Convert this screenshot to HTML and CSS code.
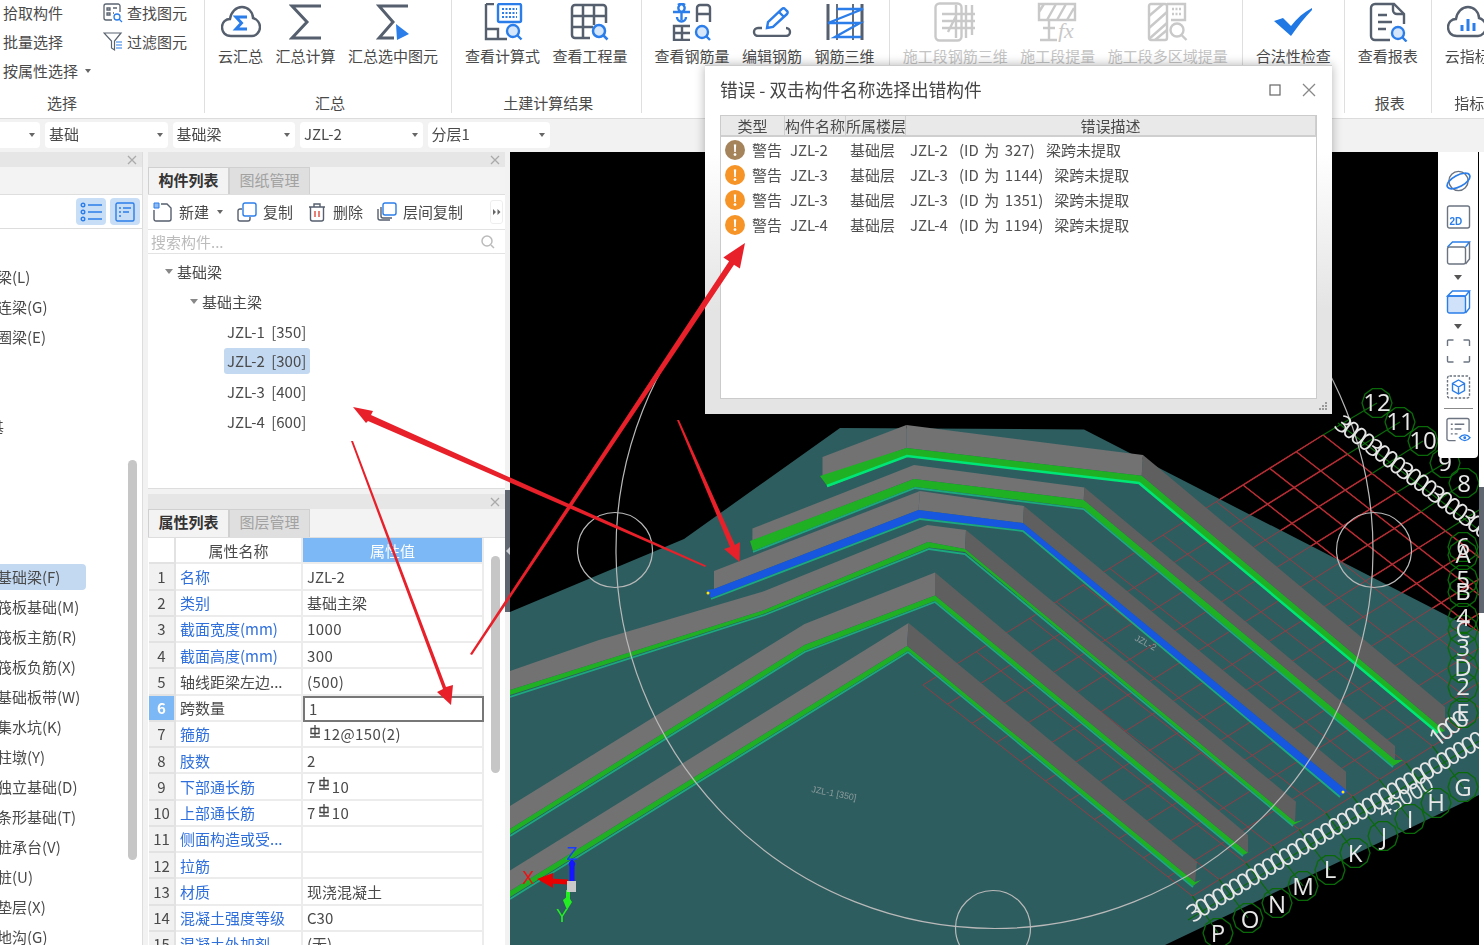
FILE: index.html
```html
<!DOCTYPE html>
<html lang="zh">
<head>
<meta charset="utf-8">
<title>错误 - 双击构件名称选择出错构件</title>
<link rel="stylesheet" href="styles.css">
</head>
<body>
<div class="app">
  <header class="ribbon">
    <section class="rgroup g-select">
      <div class="rbody select-body">
        <div class="scol">
          <div class="sitem">拾取构件</div>
          <div class="sitem">批量选择</div>
          <div class="sitem">按属性选择<span class="caret c-gap"></span></div>
        </div>
        <div class="scol scol-2">
          <div class="sitem">
            <svg class="ic20" viewBox="0 0 20 20" fill="none" stroke="#5a6370" stroke-width="1.3"><path d="M17 9V3a2 2 0 0 0-2-2H3a2 2 0 0 0-2 2v12a2 2 0 0 0 2 2h6"/><path d="M4 5h3v2H4zM10 5h4M4 10h3v2H4zM10 10h1"/><circle cx="14" cy="14" r="3" stroke="#2b7de9"/><path d="M16 16l3 3" stroke="#2b7de9"/></svg>
            <span>查找图元</span>
          </div>
          <div class="sitem">
            <svg class="ic20" viewBox="0 0 20 20" fill="none" stroke="#5a6370" stroke-width="1.2"><path d="M1 1h17l-6.500 8v9l-3-2V9z"/><path d="M13 10h6M13 13h6M13 16h6" stroke="#2b7de9"/></svg>
            <span>过滤图元</span>
          </div>
        </div>
      </div>
      <div class="rlabel rlabel-left">选择</div>
    </section>

    <section class="rgroup">
      <div class="rbody">
        <div class="rbtn"><div class="rico">
          <svg width="40" height="34" viewBox="0 0 40 34" fill="none" stroke="#555f6e" stroke-width="2.400"><path d="M10 31C4 31 1 27 1 22c0-5 4-8 8-8C10 7 15 2 21 2c6 0 11 5 11 11 4 1 7 5 7 9 0 5-4 9-8 9z"/><path d="M26 12H15l5.500 6L15 24h11" stroke="#2b7de9" stroke-width="3"/></svg>
        </div><span>云汇总</span></div>
        <div class="rbtn"><div class="rico">
          <svg width="33" height="36" viewBox="0 0 33 36" fill="none" stroke="#555f6e" stroke-width="3"><path d="M32 2H3l15 16L3 34h29"/></svg>
        </div><span>汇总计算</span></div>
        <div class="rbtn"><div class="rico">
          <svg width="34" height="36" viewBox="0 0 34 36" fill="none" stroke="#555f6e" stroke-width="3"><path d="M32 2H3l14 16L3 34h15"/><path d="M20 20l13 10-12 6z" fill="#2b7de9" stroke="none"/></svg>
        </div><span>汇总选中图元</span></div>
      </div>
      <div class="rlabel">汇总</div>
    </section>

    <section class="rgroup">
      <div class="rbody">
        <div class="rbtn"><div class="rico">
          <svg width="40" height="38" viewBox="0 0 40 38" fill="none" stroke="#555f6e" stroke-width="2.400"><path d="M3 1v35h21M3 26h12v10M3 1h8"/><rect x="15" y="1" width="23" height="18" rx="1.500" stroke="#2b7de9"/><path d="M19 6h15M19 10h15M19 14h15" stroke="#2b7de9" stroke-dasharray="2 1.500" stroke-width="2"/><circle cx="30" cy="28" r="6" fill="#d6e7fb" stroke="#2b7de9"/><path d="M34.500 32.500l4 4" stroke="#2b7de9"/></svg>
        </div><span>查看计算式</span></div>
        <div class="rbtn"><div class="rico">
          <svg width="40" height="38" viewBox="0 0 40 38" fill="none" stroke="#555f6e" stroke-width="2.500"><path d="M20 35H5a3 3 0 0 1-3-3V5a3 3 0 0 1 3-3h28a3 3 0 0 1 3 3v15"/><path d="M2 13h34M2 24h21M13 2v33M24 2v20"/><circle cx="29" cy="28" r="6" fill="#d6e7fb" stroke="#2b7de9"/><path d="M33.500 32.500l4 4" stroke="#2b7de9"/></svg>
        </div><span>查看工程量</span></div>
      </div>
      <div class="rlabel">土建计算结果</div>
    </section>

    <section class="rgroup wide">
      <div class="rbody">
        <div class="rbtn"><div class="rico">
          <svg width="40" height="38" viewBox="0 0 40 38" fill="none" stroke="#555f6e" stroke-width="2.400"><path d="M1 9h8a4 4 0 1 0-3-7M18 9h-8a4 4 0 1 1 3-7M9.500 9v8M5 14a4 4 0 0 0 9 0" stroke="#2b7de9"/><path d="M25 19V5a3 3 0 0 1 3-3h7a3 3 0 0 1 3 3v14M25 11h13"/><path d="M18 37H2V23h16M2 30h16M10 23v14"/><circle cx="30" cy="29" r="6" fill="#d6e7fb" stroke="#2b7de9"/><path d="M34.500 33.500l3.500 3.500" stroke="#2b7de9"/></svg>
        </div><span>查看钢筋量</span></div>
        <div class="rbtn"><div class="rico">
          <svg width="40" height="30" viewBox="0 0 40 30" fill="none" stroke="#555f6e" stroke-width="2.400"><path d="M10 21H6a4 4 0 0 0 0 8h28a4 4 0 0 0 0-8" /><path d="M15 21l1-6L30 2a2 2 0 0 1 3 0l2 2a2 2 0 0 1 0 3L21 20zM27 5l5 5" stroke="#2b7de9"/></svg>
        </div><span>编辑钢筋</span></div>
        <div class="rbtn"><div class="rico">
          <svg width="40" height="38" viewBox="0 0 40 38" fill="none" stroke="#555f6e" stroke-width="3"><path d="M3 1v36M37 1v36"/><path d="M12 1v36M28 1v36" stroke-width="1.800"/><path d="M12 6h26L3 20h32L10 34h26" stroke="#2b7de9" stroke-width="2.400"/></svg>
        </div><span>钢筋三维</span></div>
      </div>
      <div class="rlabel"></div>
    </section>

    <section class="rgroup off wide">
      <div class="rbody">
        <div class="rbtn"><div class="rico">
          <svg width="42" height="40" viewBox="0 0 42 40" fill="none" stroke="#c9c9c9" stroke-width="2.400"><rect x="1.500" y="1.500" width="26" height="37" rx="4"/><path d="M8 12h33M8 19h33M8 26h33M22 3v33M32 3v33M38 3v30M22 14l-8 16"/></svg>
        </div><span>施工段钢筋三维</span></div>
        <div class="rbtn"><div class="rico">
          <svg width="42" height="40" viewBox="0 0 42 40" fill="none" stroke="#c9c9c9" stroke-width="2.400"><path d="M2 2h36v16H2zM10 18l9-16M20 18l9-16M30 18l7-12M2 10l5-8"/><path d="M12 18v20M3 38h17M6 26h12"/><text class="fx" x="21" y="36">fx</text></svg>
        </div><span>施工段提量</span></div>
        <div class="rbtn"><div class="rico">
          <svg width="42" height="40" viewBox="0 0 42 40" fill="none" stroke="#c9c9c9" stroke-width="2.400"><rect x="2" y="2" width="18" height="36" rx="2"/><path d="M2 14L16 2M2 26L20 10M2 37l18-16M8 38l12-10"/><path d="M20 2h18v16H24" /><path d="M25 7h10M25 12h10" stroke-dasharray="2 1.500" stroke-width="2.500"/><circle cx="30" cy="28" r="6.500"/><path d="M34.500 33l5 5"/></svg>
        </div><span>施工段多区域提量</span></div>
      </div>
      <div class="rlabel"></div>
    </section>

    <section class="rgroup">
      <div class="rbody">
        <div class="rbtn"><div class="rico">
          <svg width="38" height="28" viewBox="0 0 38 28"><path d="M0 13l9-3 8 8C23 10 30 4 38 0l1 1C31 9 24 18 17 28z" fill="#1f78e4"/></svg>
        </div><span>合法性检查</span></div>
      </div>
      <div class="rlabel"></div>
    </section>

    <section class="rgroup">
      <div class="rbody">
        <div class="rbtn"><div class="rico">
          <svg width="40" height="40" viewBox="0 0 40 40" fill="none" stroke="#555f6e" stroke-width="2.400"><path d="M22 38H7a4 4 0 0 1-4-4V6a4 4 0 0 1 4-4h19l10 10v10"/><path d="M25 2v6a4 4 0 0 0 4 4h7"/><path d="M10 13h9M10 20h14M10 27h8"/><circle cx="30" cy="31" r="6" fill="#d6e7fb" stroke="#2b7de9"/><path d="M34.500 35.500l4 4" stroke="#2b7de9"/></svg>
        </div><span>查看报表</span></div>
      </div>
      <div class="rlabel">报表</div>
    </section>

    <section class="rgroup last">
      <div class="rbody">
        <div class="rbtn"><div class="rico">
          <svg width="40" height="34" viewBox="0 0 40 34" fill="none" stroke="#555f6e" stroke-width="2.400"><path d="M10 31C4 31 1 27 1 22c0-5 4-8 8-8C10 7 15 2 21 2c6 0 11 5 11 11 4 1 7 5 7 9 0 5-4 9-8 9z"/><path d="M15 20v6M21 14v12M27 18v8" stroke="#2b7de9" stroke-width="3"/></svg>
        </div><span>云指标</span></div>
      </div>
      <div class="rlabel">指标</div>
    </section>
  </header>

  <div class="selectors">
    <div class="combo combo-first"><span></span><i class="caret"></i></div>
    <div class="combo"><span>基础</span><i class="caret"></i></div>
    <div class="combo"><span>基础梁</span><i class="caret"></i></div>
    <div class="combo"><span>JZL-2</span><i class="caret"></i></div>
    <div class="combo"><span>分层1</span><i class="caret"></i></div>
  </div>

  <main class="workspace">
    <aside class="nav-panel">
      <div class="titlebar"><svg class="x" viewBox="0 0 10 10"><path d="M1 1l8 8M9 1l-8 8"/></svg></div>
      <div class="nav-tabs"></div>
      <div class="nav-tools">
        <button class="tool-on">
          <svg width="22" height="20" viewBox="0 0 22 20" fill="none" stroke="#2b7de9" stroke-width="1.400"><circle cx="3" cy="3" r="1.800"/><circle cx="3" cy="10" r="1.800"/><circle cx="3" cy="17" r="1.800"/><path d="M8 3h14M8 10h14M8 17h14"/></svg>
        </button>
        <button class="tool-on">
          <svg width="20" height="20" viewBox="0 0 20 20" fill="none" stroke="#2b7de9" stroke-width="1.400"><rect x="1" y="1" width="18" height="18" rx="1.500"/><path d="M4 6h2M8 6h8M4 10h2M8 10h6M4 14h2"/></svg>
        </button>
      </div>
      <div class="nav-list">
        <div class="nav-item">梁(L)</div>
        <div class="nav-item">连梁(G)</div>
        <div class="nav-item">圈梁(E)</div>
        <div class="nav-item gap-2 cut">基</div>
        <div class="nav-item gap-4 sel">基础梁(F)</div>
        <div class="nav-item">筏板基础(M)</div>
        <div class="nav-item">筏板主筋(R)</div>
        <div class="nav-item">筏板负筋(X)</div>
        <div class="nav-item">基础板带(W)</div>
        <div class="nav-item">集水坑(K)</div>
        <div class="nav-item">柱墩(Y)</div>
        <div class="nav-item">独立基础(D)</div>
        <div class="nav-item">条形基础(T)</div>
        <div class="nav-item">桩承台(V)</div>
        <div class="nav-item">桩(U)</div>
        <div class="nav-item">垫层(X)</div>
        <div class="nav-item">地沟(G)</div>
      </div>
      <div class="sb sb-nav"></div>
    </aside>

    <div class="mid">
      <section class="panel p-list">
        <div class="titlebar"><svg class="x" viewBox="0 0 10 10"><path d="M1 1l8 8M9 1l-8 8"/></svg></div>
        <div class="tabs"><div class="tab on">构件列表</div><div class="tab">图纸管理</div></div>
        <div class="tools">
          <div class="tool">
            <svg class="ic20" viewBox="0 0 20 20" fill="none" stroke="#555f6e" stroke-width="1.400"><path d="M8 2h6l4 4v11a2 2 0 0 1-2 2H3a2 2 0 0 1-2-2V8"/><path d="M1 1h5v5H1z" fill="#8fbcf2" stroke="#2b7de9" stroke-width="1"/></svg>
            <span>新建</span><i class="caret tool-caret"></i>
          </div>
          <div class="tool">
            <svg class="ic20" viewBox="0 0 20 20" fill="none" stroke="#555f6e" stroke-width="1.400"><path d="M5 7H3a2 2 0 0 0-2 2v8a2 2 0 0 0 2 2h8a2 2 0 0 0 2-2v-2"/><rect x="6" y="1" width="13" height="13" rx="2" stroke="#2b7de9"/></svg>
            <span>复制</span>
          </div>
          <div class="tool">
            <svg class="ic20" viewBox="0 0 20 20" fill="none" stroke="#555f6e" stroke-width="1.400"><path d="M2 5h16M7 5V2h6v3M3.500 5v12a2 2 0 0 0 2 2h9a2 2 0 0 0 2-2V5"/><path d="M8 9v6M12 9v6" stroke="#e04a3c"/></svg>
            <span>删除</span>
          </div>
          <div class="tool">
            <svg class="ic20" viewBox="0 0 20 20" fill="none" stroke="#555f6e" stroke-width="1.400"><path d="M1 7v9a2 2 0 0 0 2 2h10M4 5v9a2 2 0 0 0 2 2h9"/><rect x="6" y="1" width="13" height="12" rx="2" stroke="#2b7de9"/></svg>
            <span>层间复制</span>
          </div>
          <div class="more">
            <svg width="8" height="8" viewBox="0 0 8 8" fill="#666"><path d="M0 1l3 3-3 3zM4.500 1l3 3-3 3z"/></svg>
          </div>
        </div>
        <div class="search">
          <span>搜索构件...</span>
          <svg width="14" height="14" viewBox="0 0 14 14" fill="none" stroke="#bbb" stroke-width="1.500"><circle cx="6" cy="6" r="5"/><path d="M10 10l3 3"/></svg>
        </div>
        <div class="tree">
          <div class="node lv1"><i class="tri"></i>基础梁</div>
          <div class="node lv2"><i class="tri"></i>基础主梁</div>
          <div class="node lv3">JZL-1 [350]</div>
          <div class="node lv3"><span class="picked">JZL-2 [300]</span></div>
          <div class="node lv3">JZL-3 [400]</div>
          <div class="node lv3">JZL-4 [600]</div>
        </div>
      </section>

      <section class="panel p-props">
        <div class="titlebar"><svg class="x" viewBox="0 0 10 10"><path d="M1 1l8 8M9 1l-8 8"/></svg></div>
        <div class="tabs tabs-2"><div class="tab on">属性列表</div><div class="tab">图层管理</div></div>
        <div class="props">
          <div class="c num"></div><div class="c head">属性名称</div><div class="c head val-head">属性值</div>
          <div class="c num">1</div><div class="c link">名称</div><div class="c">JZL-2</div>
          <div class="c num">2</div><div class="c link">类别</div><div class="c">基础主梁</div>
          <div class="c num">3</div><div class="c link">截面宽度(mm)</div><div class="c n">1000</div>
          <div class="c num">4</div><div class="c link">截面高度(mm)</div><div class="c n">300</div>
          <div class="c num">5</div><div class="c">轴线距梁左边...</div><div class="c n">(500)</div>
          <div class="c num num-on">6</div><div class="c">跨数量</div><div class="c editing">1</div>
          <div class="c num">7</div><div class="c link">箍筋</div><div class="c n"><svg class="steel" viewBox="0 0 12 14"><path d="M2 3.500h8v5H2zM6 0v11M1 12h10"/></svg>12@150(2)</div>
          <div class="c num">8</div><div class="c link">肢数</div><div class="c">2</div>
          <div class="c num">9</div><div class="c link">下部通长筋</div><div class="c n">7<svg class="steel" viewBox="0 0 12 14"><path d="M2 3.500h8v5H2zM6 0v11M1 12h10"/></svg>10</div>
          <div class="c num">10</div><div class="c link">上部通长筋</div><div class="c n">7<svg class="steel" viewBox="0 0 12 14"><path d="M2 3.500h8v5H2zM6 0v11M1 12h10"/></svg>10</div>
          <div class="c num">11</div><div class="c link">侧面构造或受...</div><div class="c"></div>
          <div class="c num">12</div><div class="c link">拉筋</div><div class="c"></div>
          <div class="c num">13</div><div class="c link">材质</div><div class="c">现浇混凝土</div>
          <div class="c num">14</div><div class="c link">混凝土强度等级</div><div class="c">C30</div>
          <div class="c num">15</div><div class="c link">混凝土外加剂</div><div class="c">(无)</div>
        </div>
        <div class="sb sb-props"></div>
      </section>
    </div>

    <div class="vstrip"><div class="vthumb"></div></div>

    <div class="viewport">
      <svg class="scene" width="969" height="793" viewBox="510 152 969 793">
        <defs>
          <g id="grid">
            <path d="M923 685L1323 435M947.500 704.200L1347.500 454.200M972 723.400L1372 473.400M996.500 742.600L1396.500 492.600M1021 761.800L1421 511.800M1045.500 781L1445.500 531M1070 800.200L1470 550.200M1094.500 819.400L1494.500 569.400M1119 838.600L1519 588.600M1143.500 857.800L1543.500 607.800M1168 877L1568 627M1192.500 896.200L1592.500 646.200"/>
            <path d="M923 685L1192.500 896.200M949.700 668.300L1219.200 879.500M976.300 651.700L1245.800 862.900M1003 635L1272.500 846.200M1029.700 618.300L1299.200 829.500M1056.300 601.700L1325.800 812.900M1083 585L1352.500 796.200M1109.700 568.300L1379.200 779.500M1136.300 551.700L1405.800 762.900M1163 535L1432.500 746.200M1189.700 518.300L1459.200 729.500M1216.300 501.700L1485.800 712.900M1243 485L1512.500 696.200M1269.700 468.300L1539.200 679.500M1296.300 451.700L1565.800 662.900M1323 435L1592.500 646.200"/>
          </g>
          <polygon id="bub" points="15,0 12.100,8.800 4.600,14.300 -4.600,14.300 -12.100,8.800 -15,0 -12.100,-8.800 -4.600,-14.300 4.600,-14.300 12.100,-8.800"/>
        </defs>
        <rect x="510" y="152" width="969" height="793" fill="#000"/>
        <use href="#grid" fill="none" stroke="#e8161b" stroke-width="1.400"/>
        <polygon class="teal" points="510,612 684,539 840,428 1084,429.500 1479,632 1479,795 1165,945 510,945"/>
        <use href="#grid" fill="none" stroke="#943c44" stroke-width="1"/>

        <g class="beam">
          <polygon class="w1" points="822.500,457 906.400,425 906.400,448 822.500,478"/>
          <polygon class="w1" points="906.400,425 1143,455 1141.700,475.700 906.400,448"/>
          <polygon class="w2" points="1143,455 1445,707 1445,731 1141.700,475.700"/>
          <polygon class="gr" points="820,476 906.400,448 1141.700,475.700 1445,731 1438,733 1139,483 907,456 828,487"/>
          <polyline class="bright" points="827,486 907,456 1139,483 1438,733"/>

          <polygon class="w1" points="752.400,528.500 914,465 914,479 752.400,540.600"/>
          <polygon class="w1" points="914,465 1084.500,487.500 1083.700,500 914,479"/>
          <polygon class="w2" points="1084.500,487.500 1395,746 1395,760 1083.700,500"/>
          <polygon class="gr" points="750,541 914,479 1083.700,500 1395,760 1403,760 1393,766 1083.700,508 915,487 753,551"/>
          <polyline class="edge" points="753,552 915,488 1083.700,509 1393,767"/>

          <polygon class="w1" points="714,571 920,491 918.500,510 714,589"/>
          <polygon class="w1" points="920,491 1024,506 1023,523 918.500,510"/>
          <polygon class="w2" points="1024,506 1346,771.700 1346,790 1023,523"/>
          <polygon class="bl" points="707,590 714,589 918.500,510 1023,523 1346,790 1347,792 1340,796 1023,530 920,518 711,598"/>
          <polyline class="edge" points="711,599 920,519 1023,531 1340,797"/>
          <circle cx="708" cy="593" r="1.500" fill="#ffe600"/>
          <circle cx="1343" cy="792" r="1.500" fill="#ffe600"/>

          <polygon class="w1" points="510,671 599,640 764.500,591 927.400,525 966,530 965,549 928,542 764.500,610 510,690"/>
          <polygon class="w2" points="966,530 1296,801.700 1295,822 965,549"/>
          <polygon class="gr" points="510,690 764.500,610 928,542 965,549 1295,822 1303,820 1293,825 965,552 929,547.600 764.500,613.500 510,695"/>
          <polyline class="edge" points="510,697 764.500,615 929,549 965,554 1293,826"/>

          <polygon class="w1" points="510,806 804.600,624 935,572.600 935,595.500 804.600,645 510,829"/>
          <polygon class="w2" points="935,572.600 1248,835 1248,853 935,595.500"/>
          <polygon class="gr" points="510,829 804.600,645 935,595.500 1248,853 1252,851 1243,855 935,600.700 804.600,650.700 510,834"/>
          <polyline class="edge" points="510,836 804.600,652 935,602 1243,856"/>

          <polygon class="w1" points="510,870.500 908.600,623 907,646 510,891"/>
          <polygon class="w2" points="908.600,623 1197,862 1195,882 907,646"/>
          <polygon class="gr" points="510,891 907,646 1195,882 1201,880 1193,886 908,650.700 510,897"/>
          <polyline class="edge" points="510,899 908,652 1193,887"/>
        </g>

        <g class="axislines">
          <path d="M1323 435L1377 403M1347.500 454.200L1400 422M1372 473.400L1423 441M1396.500 492.600L1445 463M1421 511.800L1464 483M1445.500 531L1479 510M1192.500 896.200L1218 933M1219.200 879.500L1248 918M1245.800 862.900L1277 903M1272.500 846.200L1303 886M1299.200 829.500L1330 870M1325.800 812.900L1355 853M1352.500 796.200L1383 836M1379.200 779.500L1410 819M1405.800 762.900L1436 803M1432.500 746.200L1463 787M1188 920L1479 741M1338 423L1479 530"/>
        </g>

        <g class="arcs">
          <circle cx="994.500" cy="550" r="378.500"/>
          <circle cx="615" cy="550" r="37.500"/>
          <circle cx="993" cy="928" r="37.500"/>
          <circle cx="1374" cy="550" r="37.500"/>
        </g>

        <text class="dims" transform="translate(1333,427) rotate(37)">30003000300030003000</text>
        <text class="dims" transform="translate(1193,923) rotate(-31.300)">30000000000000000000000000000000000</text>
        <text class="dims d45" transform="translate(1383,819) rotate(-30)">45000</text>
        <text class="dims" transform="translate(1437,748) rotate(-38)">1000</text>
        <text class="tiny" transform="translate(811,792) rotate(11)">JZL-1 [350]</text>
        <text class="tiny" transform="translate(1134,640) rotate(28)">JZL-2</text>

        <g class="bubbles">
          <use href="#bub" x="1218" y="933"/><use href="#bub" x="1248" y="918"/><use href="#bub" x="1277" y="903"/><use href="#bub" x="1303" y="886"/><use href="#bub" x="1330" y="870"/><use href="#bub" x="1355" y="853"/><use href="#bub" x="1383" y="836"/><use href="#bub" x="1410" y="819"/><use href="#bub" x="1436" y="803"/><use href="#bub" x="1463" y="787"/>
          <use href="#bub" x="1463" y="713"/><use href="#bub" x="1463" y="687"/><use href="#bub" x="1463" y="668"/><use href="#bub" x="1463" y="648"/><use href="#bub" x="1463" y="630"/><use href="#bub" x="1463" y="618"/><use href="#bub" x="1463" y="592"/><use href="#bub" x="1463" y="580"/><use href="#bub" x="1463" y="555"/><use href="#bub" x="1463" y="547"/>
          <use href="#bub" x="1464" y="483"/><use href="#bub" x="1445" y="463"/><use href="#bub" x="1423" y="441"/><use href="#bub" x="1400" y="422"/><use href="#bub" x="1377" y="403"/>
        </g>
        <g class="labels">
          <text x="1218" y="942">P</text><text x="1250" y="928">O</text><text x="1277" y="913">N</text><text x="1303" y="895">M</text><text x="1330" y="878">L</text><text x="1355" y="862">K</text><text x="1384" y="845">J</text><text x="1410" y="828">I</text><text x="1436" y="811">H</text><text x="1463" y="796">G</text>
          <text x="1463" y="721">E</text><text x="1463" y="695">2</text><text x="1463" y="676">D</text><text x="1463" y="656">3</text><text x="1463" y="638">C</text><text x="1463" y="626">4</text><text x="1463" y="600">B</text><text x="1463" y="588">5</text><text x="1463" y="563">A</text><text x="1463" y="555">6</text>
          <text x="1464" y="492">8</text><text x="1445" y="471">9</text><text x="1423" y="449">10</text><text x="1400" y="430">11</text><text x="1377" y="411">12</text>
        </g>

        <g class="gizmo">
          <path d="M572 884v-22" stroke="#1515ff" stroke-width="5"/>
          <path d="M572 858l3.500 6-3.500 6-3.500-6z" fill="#1515ff"/>
          <path d="M568 882l-18-1" stroke="#e80000" stroke-width="5"/>
          <path d="M537 879l16-6v15z" fill="#e80000"/>
          <path d="M568 890v14" stroke="#22ee22" stroke-width="4"/>
          <path d="M567 910l-4-10 5-4 4 6z" fill="#22ee22"/>
          <rect x="567" y="881" width="9" height="11" fill="#c9c9c9"/>
          <text x="572" y="860" fill="#1a3cff">Z</text>
          <text x="528" y="884" fill="#ee1111">X</text>
          <text x="562" y="922" fill="#22ee22">Y</text>
        </g>
      </svg>

      <nav class="viewtools">
        <svg class="vt" viewBox="0 0 26 24" fill="none" stroke="#6b7480" stroke-width="1.400"><ellipse cx="13" cy="12" rx="10" ry="10"/><ellipse cx="13" cy="12" rx="13" ry="6" transform="rotate(-28 13 12)" stroke="#2b7de9" stroke-width="1.800"/></svg>
        <svg class="vt" viewBox="0 0 24 24" fill="none" stroke="#6b7480" stroke-width="1.400"><rect x="1" y="1" width="22" height="22" rx="2"/><text class="t2d" x="3" y="20">2D</text></svg>
        <svg class="vt" viewBox="0 0 24 24" fill="none" stroke="#6b7480" stroke-width="1.400"><rect x="1" y="6" width="18" height="17" rx="2"/><path d="M1 6l5-5h17l-4 5" stroke="#2b7de9"/><path d="M23 1v17l-4 5"/></svg>
        <i class="vcaret"></i>
        <svg class="vt" viewBox="0 0 24 24" fill="#cfe2fa" stroke="#2b7de9" stroke-width="1.400"><rect x="1" y="6" width="18" height="17" rx="2"/><path d="M1 6l5-5h17l-4 5z" fill="none"/><path d="M23 1v17l-4 5" fill="none"/></svg>
        <i class="vcaret"></i>
        <svg class="vt" viewBox="0 0 24 24" fill="none" stroke="#6b7480" stroke-width="1.400"><path d="M1 7V2a1 1 0 0 1 1-1h5M17 1h5a1 1 0 0 1 1 1v5M23 17v5a1 1 0 0 1-1 1h-5M7 23H2a1 1 0 0 1-1-1v-5"/></svg>
        <svg class="vt" viewBox="0 0 24 24" fill="none" stroke="#6b7480" stroke-width="1.400"><rect x="1" y="1" width="22" height="22" rx="2" stroke-dasharray="2.500 1.500"/><path d="M12 5l6 3.500v7L12 19l-6-3.500v-7zM6 8.500l6 3.500 6-3.500M12 12v7" stroke="#2b7de9"/></svg>
        <div class="vdiv"></div>
        <svg class="vt vt-last" viewBox="0 0 26 26" fill="none" stroke="#6b7480" stroke-width="1.400"><path d="M10 24H3a2 2 0 0 1-2-2V3a2 2 0 0 1 2-2h19a2 2 0 0 1 2 2v12"/><path d="M5 7h2M9 7h10M5 12h2M9 12h7M5 17h2M9 17h3"/><path d="M14 21c3-4 8-4 11 0-3 4-8 4-11 0z" stroke="#2b7de9"/><circle cx="19.500" cy="21" r="1.500" fill="#2b7de9" stroke="none"/></svg>
      </nav>
    </div>

    <div class="rstrip"><div class="rthumb"></div></div>
  </main>

  <section class="dialog">
    <div class="dlg-title">
      <h1>错误 - 双击构件名称选择出错构件</h1>
      <svg class="dlg-btn" viewBox="0 0 12 12"><rect x="1" y="1" width="10" height="10" fill="none" stroke="#666" stroke-width="1.200"/></svg>
      <svg class="dlg-btn dlg-x" viewBox="0 0 14 14"><path d="M1 1l12 12M13 1L1 13" stroke="#888" stroke-width="1.300"/></svg>
    </div>
    <div class="dlg-table">
      <div class="dlg-head"><div>类型</div><div>构件名称</div><div>所属楼层</div><div>错误描述</div></div>
      <div class="dlg-row"><i class="warn brown">!</i><span>警告</span><span>JZL-2</span><span>基础层</span><span class="desc">JZL-2&nbsp; (ID 为 327)&nbsp; 梁跨未提取</span></div>
      <div class="dlg-row"><i class="warn">!</i><span>警告</span><span>JZL-3</span><span>基础层</span><span class="desc">JZL-3&nbsp; (ID 为 1144)&nbsp; 梁跨未提取</span></div>
      <div class="dlg-row"><i class="warn">!</i><span>警告</span><span>JZL-3</span><span>基础层</span><span class="desc">JZL-3&nbsp; (ID 为 1351)&nbsp; 梁跨未提取</span></div>
      <div class="dlg-row"><i class="warn">!</i><span>警告</span><span>JZL-4</span><span>基础层</span><span class="desc">JZL-4&nbsp; (ID 为 1194)&nbsp; 梁跨未提取</span></div>
    </div>
    <svg class="grip" viewBox="0 0 10 10" fill="#9a9a9a"><rect x="7" y="1" width="2" height="2"/><rect x="4" y="4" width="2" height="2"/><rect x="7" y="4" width="2" height="2"/><rect x="1" y="7" width="2" height="2"/><rect x="4" y="7" width="2" height="2"/><rect x="7" y="7" width="2" height="2"/></svg>
  </section>

  <svg class="arrows" width="1484" height="945" viewBox="0 0 1484 945">
    <polygon points="353,407 373,411 371,415 706,565.500 705,567 368,421 366,423"/>
    <polygon points="351,441 353,441 446,687 453,685 451,705 437,692 443,689"/>
    <polygon points="470,654 472,655 734,264.700 739.900,268.500 745,243 723.300,257.400 729.100,261.300"/>
    <polygon points="677,420 679,420 735,545 740,542 739.500,562 724,549 730,547"/>
  </svg>
</div>
</body>
</html>
```
FILE: styles.css
```css
* { box-sizing: border-box; }
html, body { margin: 0; padding: 0; }
body {
  width: 1484px;
  height: 945px;
  overflow: hidden;
  background: #f2f2f2;
  font-family: "Noto Sans CJK SC", "Noto Sans", sans-serif;
  font-size: 15px;
  color: #4a4a4a;
}
.app {
  position: relative;
  width: 1484px;
  height: 945px;
  overflow: hidden;
  filter: blur(0.4px);
}

/* ribbon */
.ribbon {
  display: flex;
  height: 119px;
  background: #fff;
  border-bottom: 1px solid #dcdcdc;
}
.rgroup {
  display: flex;
  flex-direction: column;
  height: 113px;
  padding: 0 13px;
  border-right: 1px solid #dfdfdf;
  flex: none;
}
.rgroup.wide { padding-right: 14px; }
.rgroup.last { border-right: 0; }
.rbody {
  display: flex;
  gap: 12.5px;
  height: 93px;
}
.rlabel {
  height: 20px;
  padding-left: 4px;
  line-height: 20px;
  text-align: center;
}
.rlabel-left { padding-left: 47px; text-align: left; }
.rbtn {
  display: flex;
  flex-direction: column;
  align-items: center;
  white-space: nowrap;
}
.rbtn span { line-height: 20px; }
.rico {
  display: flex;
  align-items: center;
  justify-content: center;
  height: 46px;
  padding-bottom: 3px;
}
.off .rbtn { color: #c4c4c4; }
.fx {
  font-family: "Liberation Serif", serif;
  font-style: italic;
  font-size: 22px;
  fill: #c9c9c9;
  stroke: none;
}

.g-select { width: 205px; padding: 0; }
.select-body { gap: 0; padding-left: 3px; }
.scol { width: 100px; margin-top: -2px; }
.scol-2 { width: 95px; }
.sitem {
  display: flex;
  align-items: center;
  height: 29px;
  white-space: nowrap;
}
.ic20 { width: 20px; height: 20px; flex: none; }
.sitem .ic20 { margin-right: 4px; }
.caret {
  display: inline-block;
  width: 0;
  height: 0;
  border-left: 3.5px solid transparent;
  border-right: 3.5px solid transparent;
  border-top: 4px solid #666;
}
.c-gap { margin-left: 7px; }

/* selector row */
.selectors {
  display: flex;
  gap: 5px;
  height: 33px;
  padding-top: 3px;
  background: #f2f2f2;
}
.combo {
  display: flex;
  align-items: center;
  justify-content: space-between;
  flex: none;
  width: 122.5px;
  height: 26px;
  padding: 0 5px 0 4px;
  background: #fff;
  border-radius: 4px;
}
.combo span { margin-top: -3px; }
.combo-first { margin-left: -82.5px; }

/* workspace */
.workspace {
  display: flex;
  height: 793px;
}
.titlebar {
  display: flex;
  justify-content: flex-end;
  align-items: center;
  height: 15px;
  padding-right: 5px;
  background: #e6e6e6;
  flex: none;
}
.x {
  width: 10px;
  height: 10px;
  fill: none;
  stroke: #aaa;
  stroke-width: 1.300;
}

.nav-panel {
  position: relative;
  flex: none;
  width: 143px;
  margin-right: 5px;
  display: flex;
  flex-direction: column;
  background: #fff;
  border-right: 1px solid #ddd;
  overflow: hidden;
}
.nav-tabs { height: 28px; background: #f3f3f3; border-bottom: 1px solid #dedede; flex: none; }
.nav-tools {
  display: flex;
  justify-content: flex-end;
  gap: 4px;
  height: 34px;
  padding: 3px 2px 0 0;
  border-bottom: 1px solid #ddd;
  flex: none;
}
.tool-on {
  display: flex;
  align-items: center;
  justify-content: center;
  width: 30px;
  height: 27px;
  padding: 0;
  background: #c8def6;
  border: 0;
  border-radius: 4px;
}
.nav-list { padding-top: 33px; }
.nav-item {
  height: 26px;
  margin: 2px 0 4px -3px;
  line-height: 26px;
  white-space: nowrap;
}
.nav-item.gap-2 { margin-top: 64px; }
.nav-item.gap-4 { margin-top: 124px; }
.nav-item.cut { margin-left: -11px; }
.nav-item.sel {
  width: 89px;
  background: #c3d9f1;
  border-radius: 4px;
}
.sb {
  position: absolute;
  width: 9px;
  background: #c6c6c6;
  border-radius: 5px;
}
.sb-nav { left: 128px; top: 308px; height: 400px; }

.mid {
  display: flex;
  flex-direction: column;
  gap: 5px;
  flex: none;
  width: 357px;
}
.panel {
  position: relative;
  display: flex;
  flex-direction: column;
  background: #fff;
  overflow: hidden;
}
.p-list { height: 337px; border-bottom: 1px solid #ddd; }
.p-props { height: 451px; }
.tabs {
  display: flex;
  height: 28px;
  background: #f3f3f3;
  border-bottom: 1px solid #dedede;
  flex: none;
}
.tabs-2 { height: 29px; }
.tab {
  width: 81px;
  line-height: 24px;
  text-align: center;
  color: #a2a2a2;
  background: #dfdfdf;
  border: 1px solid #d0d0d0;
  border-bottom: 0;
}
.tab.on { color: #333; font-weight: 700; background: #f3f3f3; }
.tools {
  display: flex;
  align-items: center;
  gap: 14px;
  height: 35px;
  padding-left: 5px;
  border-bottom: 1px solid #e3e3e3;
  flex: none;
}
.tool { display: flex; align-items: center; gap: 6px; white-space: nowrap; }
.tool span { margin-top: -2px; }
.tool-caret { margin-left: 2px; }
.more {
  display: flex;
  align-items: center;
  justify-content: center;
  width: 13px;
  height: 24px;
  margin-left: auto;
  margin-right: 2px;
  border: 1px solid #eee;
  border-radius: 3px;
}
.search {
  display: flex;
  align-items: center;
  justify-content: space-between;
  height: 24px;
  padding: 0 10px 0 3px;
  color: #bcbcbc;
  border-bottom: 1px solid #e3e3e3;
  flex: none;
}
.tree { padding-top: 2px; }
.node {
  display: flex;
  align-items: center;
  height: 30px;
  white-space: nowrap;
}
.lv1 { padding-left: 17px; }
.lv2 { padding-left: 42px; }
.lv3 { padding-left: 79px; word-spacing: 3px; }
.tri {
  width: 0;
  height: 0;
  margin-right: 4px;
  border-left: 4px solid transparent;
  border-right: 4px solid transparent;
  border-top: 5px solid #888;
}
.picked {
  display: block;
  margin-left: -3px;
  padding: 0 4px 0 3px;
  line-height: 26px;
  background: #c3d9f1;
  border-radius: 3px;
}

.props {
  display: grid;
  grid-template-columns: 27px 127px 181px;
  grid-auto-rows: 26.25px;
  width: 335px;
  margin-left: 1px;
}
.c {
  display: flex;
  align-items: center;
  padding-left: 4px;
  border-right: 2px solid #ececec;
  border-bottom: 2px solid #ececec;
  white-space: nowrap;
  overflow: hidden;
}
.n { letter-spacing: 0.4px; }
.num {
  justify-content: center;
  padding: 0;
  background: #f1f1f1;
  border-color: #e2e2e2;
}
.num:first-child { background: #fff; }
.num-on { background: #7cb8f5; color: #fff; font-weight: 700; }
.head { justify-content: center; padding: 0; }
.val-head { background: #7cb8f5; color: #fff; }
.link { color: #2f6fdc; }
.editing { border: 2px solid #777; }
.steel {
  width: 12px;
  height: 14px;
  margin: -4px 2px 0;
  fill: none;
  stroke: #444;
  stroke-width: 1.300;
  flex: none;
}
.sb-props { left: 343px; top: 62px; height: 217px; }

.vstrip { flex: none; width: 5px; }
.vthumb {
  display: flex;
  align-items: center;
  justify-content: center;
  height: 122px;
  margin-top: 338px;
  background: #5f6670;
}
.vthumb::after {
  content: "";
  border-top: 4px solid transparent;
  border-bottom: 4px solid transparent;
  border-right: 4px solid #c8ccd0;
}

.viewport {
  position: relative;
  flex: none;
  width: 969px;
  height: 793px;
  overflow: hidden;
}
.scene { display: block; }
.teal { fill: #2e5d5f; }
.w1 { fill: #727272; }
.w2 { fill: #5f5f5f; }
.gr { fill: #1fb024; }
.bl { fill: #1757e0; }
.bright { fill: none; stroke: #00e676; stroke-width: 2.500; }
.edge { fill: none; stroke: #1ca880; stroke-width: 1.800; }
.axislines { fill: none; stroke: #0a6a0a; stroke-width: 1.200; }
.arcs { fill: none; stroke: #b9b9b9; stroke-width: 1.200; }
.dims {
  font-family: "Open Sans", sans-serif;
  font-size: 24px;
  letter-spacing: -4px;
  fill: #e6e6e6;
}
.d45 { font-size: 22px; letter-spacing: -0.5px; }
.tiny {
  font-family: "Liberation Sans", sans-serif;
  font-size: 9px;
  fill: #8b9b9c;
}
.bubbles { fill: none; stroke: #0a6a0a; stroke-width: 1.300; }
.labels text {
  font-family: "Open Sans", sans-serif;
  font-size: 24px;
  fill: #e8e8e8;
  text-anchor: middle;
}
.gizmo text {
  font-family: "Liberation Sans", sans-serif;
  font-size: 18px;
  text-anchor: middle;
}

.viewtools {
  position: absolute;
  top: 0;
  right: 1px;
  width: 40px;
  height: 306px;
  padding-top: 17px;
  display: flex;
  flex-direction: column;
  align-items: center;
  background: #fff;
  border-radius: 0 0 4px 4px;
}
.vt { width: 25px; height: 24px; flex: none; margin-bottom: 12px; }
.t2d {
  font-family: "Liberation Sans", sans-serif;
  font-size: 10px;
  font-weight: 700;
  fill: #2b7de9;
  stroke: none;
}
.vcaret {
  flex: none;
  width: 0;
  height: 0;
  margin: -2px 0 10px;
  border-left: 4px solid transparent;
  border-right: 4px solid transparent;
  border-top: 5px solid #555;
}
.vdiv { width: 29px; height: 1px; margin: -3px 0 8px; background: #888; flex: none; }
.vt-last { height: 26px; margin: 0; }

.rstrip { flex: none; width: 5px; background: #fff; }
.rthumb { height: 126px; margin-top: 335px; background: #5f6670; }

/* dialog */
.dialog {
  position: absolute;
  left: 705px;
  top: 65px;
  width: 627px;
  height: 349px;
  padding: 0 15px 15px;
  background: linear-gradient(#fff 0, #fff 25%, #e4e4e4 70%);
  border-top: 1px solid #ccc;
  box-shadow: 0 0 10px rgba(0, 0, 0, .3);
}
.dlg-title {
  display: flex;
  align-items: center;
  height: 49px;
  padding-bottom: 2px;
}
.dlg-title h1 {
  margin: -2px auto 0 0;
  font-size: 17.7px;
  font-weight: 400;
  color: #444;
}
.dlg-btn { width: 12px; height: 12px; margin-right: 21px; }
.dlg-x { width: 14px; height: 14px; margin-right: 1px; }
.dlg-table {
  height: 284px;
  background: #fff;
  border: 1px solid #cbcbcb;
}
.dlg-head {
  display: grid;
  grid-template-columns: 64px 61px 60px 1fr;
  height: 21px;
  line-height: 19px;
  text-align: center;
  white-space: nowrap;
  background: #e9e9e9;
  border-bottom: 2px solid #cfcfcf;
}
.dlg-head > div { border-right: 1px solid #cfcfcf; }
.dlg-row {
  display: grid;
  grid-template-columns: 31px 38px 60px 60px 1fr;
  align-items: center;
  height: 25px;
  white-space: pre;
  color: #505050;
}
.desc { word-spacing: 2.2px; }
.warn {
  display: block;
  width: 20px;
  height: 20px;
  margin-left: 4px;
  line-height: 20px;
  text-align: center;
  font-style: normal;
  font-weight: 700;
  color: #fff;
  background: #f79428;
  border-radius: 50%;
}
.warn.brown { background: #a5845b; }
.grip {
  position: absolute;
  right: 4px;
  bottom: 3px;
  width: 10px;
  height: 10px;
}

.arrows {
  position: absolute;
  left: 0;
  top: 0;
  fill: #e8202a;
  pointer-events: none;
}
```
